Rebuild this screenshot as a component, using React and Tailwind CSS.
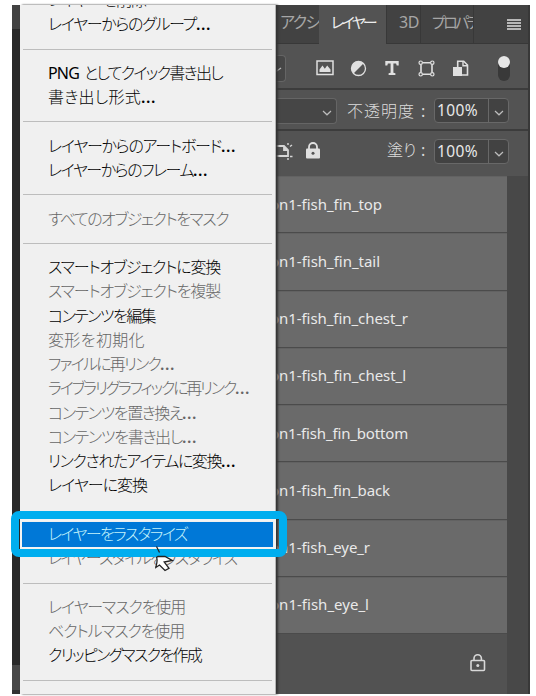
import { useLayoutEffect, useRef } from "react";

// Single-line label whose tracking is adjusted so it spans a given width.
function Fit({ width, className = "", children }) {
  const ref = useRef(null);
  useLayoutEffect(() => {
    const el = ref.current;
    const apply = () => {
      el.style.letterSpacing = "0px";
      const natural = el.getBoundingClientRect().width;
      el.style.letterSpacing = `${(width - natural) / el.textContent.length}px`;
    };
    apply();
    document.fonts?.ready.then(apply);
  }, [width]);
  return (
    <span ref={ref} className={`inline-block whitespace-nowrap ${className}`}>
      {children}
    </span>
  );
}

// `hidden` marks a separator slot that leaves a gap but draws no rule.
const MENU = [
  { t: "レイヤーを削除", w: 98 },
  { t: "レイヤーからのグループ", w: 163, dots: true },
  { sep: true },
  { lead: "PNG", t: "としてクイック書き出し", w: 174 },
  { t: "書き出し形式", w: 108, dots: true },
  { sep: true },
  { t: "レイヤーからのアートボード", w: 188, dots: true },
  { t: "レイヤーからのフレーム", w: 160, dots: true },
  { sep: true },
  { t: "すべてのオブジェクトをマスク", w: 180, off: true },
  { sep: true },
  { t: "スマートオブジェクトに変換", w: 172 },
  { t: "スマートオブジェクトを複製", w: 172, off: true },
  { t: "コンテンツを編集", w: 107 },
  { t: "変形を初期化", w: 97, off: true },
  { t: "ファイルに再リンク", w: 127, off: true, dots: true },
  { t: "ライブラリグラフィックに再リンク", w: 202, off: true, dots: true },
  { t: "コンテンツを置き換え", w: 149, off: true, dots: true },
  { t: "コンテンツを書き出し", w: 149, off: true, dots: true },
  { t: "リンクされたアイテムに変換", w: 188, dots: true },
  { t: "レイヤーに変換", w: 99 },
  { sep: true, hidden: true },
  { t: "レイヤーをラスタライズ", w: 139, active: true },
  { t: "レイヤースタイルをラスタライズ", w: 189, off: true },
  { sep: true },
  { t: "レイヤーマスクを使用", w: 137, off: true },
  { t: "ベクトルマスクを使用", w: 136, off: true },
  { t: "クリッピングマスクを作成", w: 153 },
  { sep: true },
];

const LAYERS = [
  ["on1-fish_fin_top", 112],
  ["on1-fish_fin_tail", 110],
  ["on1-fish_fin_chest_r", 138],
  ["on1-fish_fin_chest_l", 136],
  ["on1-fish_fin_bottom", 138],
  ["on1-fish_fin_back", 120],
  ["on1-fish_eye_r", 100],
  ["on1-fish_eye_l", 99],
];

function Menu() {
  return (
    <div className="absolute left-2 top-0 h-[689px] w-[256px] overflow-hidden border-r border-[#b5b5b5] bg-[#f0f0f0] shadow-[2px_0_2px_#333]">
      <div className="-mt-[16.5px] flex flex-col">
        {MENU.map((m, i) =>
          m.sep ? (
            <div key={i} className="mx-[3px] flex h-[24.27px] shrink-0 items-center">
              {!m.hidden && <div className="h-px w-full bg-[#bdbdbd]" />}
            </div>
          ) : (
            <div
              key={i}
              className={`mx-0.5 flex h-[24.27px] shrink-0 items-center pb-px pl-[26px] text-base font-light leading-none ${
                m.active ? "bg-[#0078d7] text-[#c4f3fb]" : m.off ? "text-[#666]" : "text-black"
              }`}
            >
              {m.lead && <Fit width={31} className="mr-[5px] font-normal">{m.lead}</Fit>}
              <Fit width={m.w - (m.dots ? 15 : 0) - (m.lead ? 36 : 0)} className="[font-feature-settings:'palt']">{m.t}</Fit>
              {m.dots && <Fit width={15} className="font-semibold">...</Fit>}
            </div>
          )
        )}
      </div>
    </div>
  );
}

function Chevron() {
  return (
    <svg width="10" height="6" viewBox="0 0 10 6" fill="none" stroke="#bdbdbd" strokeWidth="1.2">
      <path d="M1 1l4 3.8L9 1" />
    </svg>
  );
}

function Percent() {
  return (
    <div className="flex h-[25px] w-[75px] rounded-sm border border-[#686868] bg-[#424242] text-[#e8e8e8]">
      <div className="flex w-[53px] items-center pl-[2px] text-[15.5px] leading-none">
        <Fit width={41}>100%</Fit>
      </div>
      <div className="flex flex-1 items-center justify-center border-l border-[#686868] pt-1">
        <Chevron />
      </div>
    </div>
  );
}

function Tabs() {
  return (
    <div className="flex h-[39px] bg-[#424242] text-base leading-none text-[#a6a6a6]">
      <div className="w-[43px] overflow-hidden border-b border-[#383838] pl-[4px] pt-[9px]">
        <Fit width={39} className="[font-feature-settings:'palt']">アクシ</Fit>
      </div>
      <div className="w-[67px] bg-[#535353] pl-[12px] pt-[9px] text-[#ededed]">
        <Fit width={44} className="text-[15px] [font-feature-settings:'palt']">レイヤー</Fit>
      </div>
      <div className="w-[35px] border-x border-b border-[#383838] pl-[12px] pt-[9px]">
        <Fit width={20}>3D</Fit>
      </div>
      <div className="w-[53px] overflow-hidden border-b border-r border-[#383838] pl-[11px] pt-[9px]">
        <div className="w-[41px] overflow-hidden">
          <Fit width={46} className="text-[15px] [font-feature-settings:'palt']">プロパテ</Fit>
        </div>
      </div>
      <div className="flex flex-1 flex-col items-end gap-px border-b border-[#383838] pr-[7px] pt-[14px]">
        <div className="h-0.5 w-[14px] bg-[#b8b8b8]" />
        <div className="h-0.5 w-[14px] bg-[#b8b8b8]" />
        <div className="h-0.5 w-[14px] bg-[#b8b8b8]" />
        <div className="h-0.5 w-[14px] bg-[#b8b8b8]" />
      </div>
    </div>
  );
}

function FilterBar() {
  return (
    <div className="flex h-[46px] items-center border-b-2 border-[#3c3c3c] pt-1">
      <div className="flex h-[27px] w-[10px] shrink-0 items-center rounded-r-sm border border-l-0 border-[#656565] bg-[#464646]">
        <svg className="mt-1" width="6" height="6" viewBox="0 0 6 6" fill="none" stroke="#bdbdbd" strokeWidth="1.2"><path d="M0 4.5L5 1" /></svg>
      </div>
      <svg className="ml-[30px] shrink-0" width="18" height="16" viewBox="0 0 18 16">
        <rect x="1" y="1" width="16" height="13.5" fill="none" stroke="#e0e0e0" strokeWidth="1.5" />
        <path d="M3.5 12V9.5l3-4 2.3 3.3 2.4-3.3 3.3 4V12z" fill="#e0e0e0" />
      </svg>
      <svg className="ml-[16px] shrink-0" width="17" height="17" viewBox="0 0 17 17">
        <circle cx="8.5" cy="8.5" r="7" fill="none" stroke="#e0e0e0" strokeWidth="1.3" />
        <path d="M13.45 3.55A7 7 0 0 0 3.55 13.45z" fill="#e0e0e0" />
      </svg>
      <svg className="ml-[18px] shrink-0" width="14" height="16" viewBox="0 0 14 16">
        <path d="M0.3 1h13.4v4.6h-2l-.6-2H8.4v9.2l2 .4V15H3.6v-1.8l2-.4V3.6H2.9l-.6 2h-2z" fill="#e0e0e0" />
      </svg>
      <svg className="ml-[19px] shrink-0" width="17" height="17" viewBox="0 0 17 17" fill="none" stroke="#e0e0e0" strokeWidth="1.2">
        <path d="M4.5 2.7h8M4.5 14.3h8M3 4.5v8M14 4.5v8" strokeWidth="1.6" />
        <circle cx="2.7" cy="2.7" r="1.7" /><circle cx="14.3" cy="2.7" r="1.7" />
        <circle cx="2.7" cy="14.3" r="1.7" /><circle cx="14.3" cy="14.3" r="1.7" />
      </svg>
      <svg className="ml-[18px] shrink-0" width="16" height="17" viewBox="0 0 16 17">
        <path d="M4.7 8V1.2h6L14.5 5v10H9" fill="none" stroke="#e0e0e0" strokeWidth="1.6" />
        <path d="M10 1v4.8h5" fill="none" stroke="#e0e0e0" strokeWidth="1.4" />
        <rect x="0" y="7" width="9" height="9" fill="#e0e0e0" />
      </svg>
      <div className="ml-[29px] h-[25px] w-[12px] shrink-0 rounded-full bg-[#393939]">
        <div className="size-[12px] rounded-full bg-[#e6e6e6]" />
      </div>
    </div>
  );
}

export default function App() {
  return (
    <div className="h-[696px] w-[536px] overflow-hidden bg-white pl-3 pt-[5px] font-['Noto_Sans','Noto_Sans_CJK_JP',sans-serif]">
      <div className="relative flex h-[689px] w-[518px] bg-[#292929]">
        <div className="flex w-2 shrink-0 flex-col justify-between">
          <div className="h-6 bg-[#424242]" />
          <div className="h-[29px] border-b-4 border-[#333] bg-[#484848]" />
        </div>
        <div className="ml-[256px] flex w-[254px] shrink-0 flex-col border-r-2 border-[#383838] bg-[#535353]">
          <Tabs />
          <FilterBar />
          <div className="flex h-[41px] items-center border-b-2 border-[#3c3c3c] pt-0.5">
            <div className="flex h-[26px] w-[61px] items-center justify-end rounded-r-sm border border-l-0 border-[#656565] bg-[#464646] pr-1 pt-1">
              <Chevron />
            </div>
            <div className="ml-[10px] w-[87px] text-base font-light leading-none text-[#dcdcdc]">
              <Fit width={68}>不透明度</Fit>
              <span className="ml-[6px] font-normal">:</span>
            </div>
            <Percent />
          </div>
          <div className="flex h-[45px] items-start pt-[8px]">
            <svg className="mt-[3px] shrink-0" width="20" height="18" viewBox="0 0 20 18" fill="none" stroke="#d6d6d6">
              <path d="M0 4h8l4 4v6H0M8 4v4h4" strokeWidth="1.8" />
              <path d="M12 1v2M12 16v2M14 4.5l2-1.5M14 14.5h2.5" strokeWidth="1.4" />
            </svg>
            <svg className="ml-[10px] mt-[3px] shrink-0" width="14" height="17" viewBox="0 0 14 17">
              <path d="M3 8V5a4 4 0 0 1 8 0v3" fill="none" stroke="#e0e0e0" strokeWidth="1.8" />
              <rect y="6.5" width="14" height="10" rx="1" fill="#e0e0e0" />
              <circle cx="7" cy="11.3" r="1.5" fill="#555" />
            </svg>
            <div className="ml-[67px] mt-[3px] w-[47px] text-base font-light leading-none text-[#dcdcdc]">
              <Fit width={30}>塗り</Fit>
              <span className="ml-[4px] font-normal">:</span>
            </div>
            <Percent />
          </div>
          <div className="flex flex-1 bg-[#484848]">
            <div className="flex w-[231px] flex-col">
              {LAYERS.map(([name, w]) => (
                <div key={name} className="flex h-[57.25px] shrink-0 items-center border-b border-[#4b4b4b] bg-[#6a6a6a] text-[15px] leading-none text-[#e9e9e9] shadow-[inset_0_1px_0_#626262]">
                  <Fit width={w} className="-ml-[6px]">{name}</Fit>
                </div>
              ))}
              <div className="flex flex-1 items-center justify-end bg-[#525252] pb-[3px] pr-[21px]">
                <svg width="16" height="18" viewBox="0 0 16 18" fill="none" stroke="#d8d8d8" strokeWidth="1.6">
                  <rect x="1" y="6.5" width="13.5" height="10" rx="1" />
                  <path d="M4 6V4.5a3.7 3.7 0 0 1 7.4 0V6" />
                  <circle cx="7.8" cy="11.5" r="1.5" fill="#d8d8d8" stroke="none" />
                </svg>
              </div>
            </div>
          </div>
        </div>
        <Menu />
        <div className="absolute -left-px top-[506px] h-[46px] w-[276px] rounded-lg border-8 border-[#00aeef] pl-px pr-[3px]">
          <div className="h-full w-full border-2 border-[#f3f3f3]" />
        </div>
        <svg className="absolute left-[143px] top-[540px]" width="20" height="30" viewBox="0 0 20 30">
          <path d="M1.5 1.5L4.5 7.5" stroke="#222" strokeWidth="1.3" fill="none" />
          <path d="M1.500 12.500C3 15 1.500 20 0.800 22.500L4.500 20l5.500 5.500 4-2.200-4.800-6.300 8-1.500L10 11.500H3z" fill="#fff" stroke="#222" strokeWidth="1.3" />
        </svg>
      </div>
    </div>
  );
}
